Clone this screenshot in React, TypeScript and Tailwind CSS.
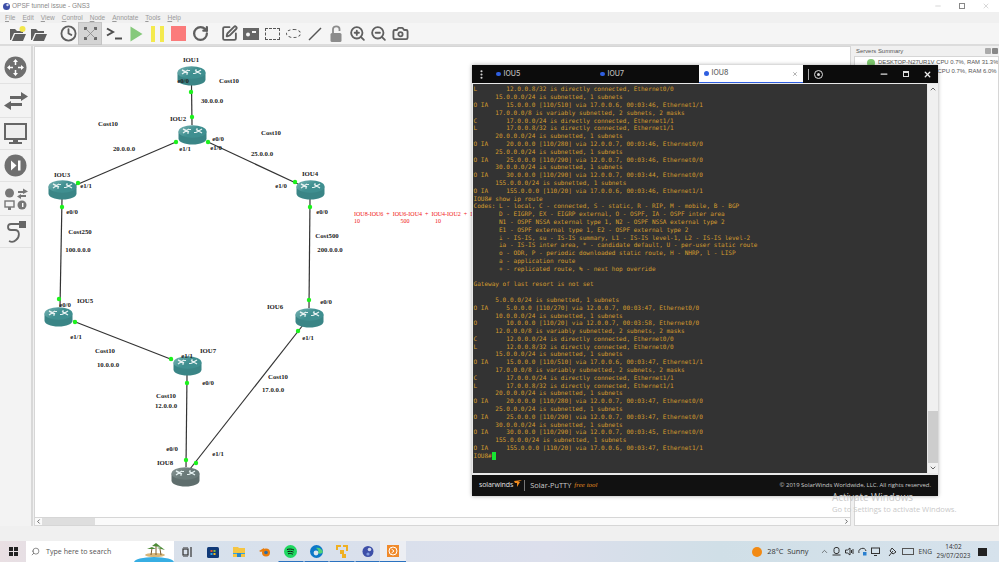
import { Camera, ChevronDown, ChevronLeft, ChevronRight, ChevronUp, Clock, EllipsisVertical, Minus, RotateCw, Search, SquarePen, X, ZoomIn, ZoomOut } from 'lucide-react'

const terminalLines = [
  'L        12.0.0.8/32 is directly connected, Ethernet0/0',
  '      15.0.0.0/24 is subnetted, 1 subnets',
  'O IA     15.0.0.0 [110/510] via 17.0.0.6, 00:03:46, Ethernet1/1',
  '      17.0.0.0/8 is variably subnetted, 2 subnets, 2 masks',
  'C        17.0.0.0/24 is directly connected, Ethernet1/1',
  'L        17.0.0.8/32 is directly connected, Ethernet1/1',
  '      20.0.0.0/24 is subnetted, 1 subnets',
  'O IA     20.0.0.0 [110/280] via 12.0.0.7, 00:03:46, Ethernet0/0',
  '      25.0.0.0/24 is subnetted, 1 subnets',
  'O IA     25.0.0.0 [110/290] via 12.0.0.7, 00:03:46, Ethernet0/0',
  '      30.0.0.0/24 is subnetted, 1 subnets',
  'O IA     30.0.0.0 [110/290] via 12.0.0.7, 00:03:44, Ethernet0/0',
  '      155.0.0.0/24 is subnetted, 1 subnets',
  'O IA     155.0.0.0 [110/20] via 17.0.0.6, 00:03:46, Ethernet1/1',
  'IOU8# show ip route',
  'Codes: L - local, C - connected, S - static, R - RIP, M - mobile, B - BGP',
  '       D - EIGRP, EX - EIGRP external, O - OSPF, IA - OSPF inter area',
  '       N1 - OSPF NSSA external type 1, N2 - OSPF NSSA external type 2',
  '       E1 - OSPF external type 1, E2 - OSPF external type 2',
  '       i - IS-IS, su - IS-IS summary, L1 - IS-IS level-1, L2 - IS-IS level-2',
  '       ia - IS-IS inter area, * - candidate default, U - per-user static route',
  '       o - ODR, P - periodic downloaded static route, H - NHRP, l - LISP',
  '       a - application route',
  '       + - replicated route, % - next hop override',
  ' ',
  'Gateway of last resort is not set',
  ' ',
  '      5.0.0.0/24 is subnetted, 1 subnets',
  'O IA     5.0.0.0 [110/270] via 12.0.0.7, 00:03:47, Ethernet0/0',
  '      10.0.0.0/24 is subnetted, 1 subnets',
  'O        10.0.0.0 [110/20] via 12.0.0.7, 00:03:58, Ethernet0/0',
  '      12.0.0.0/8 is variably subnetted, 2 subnets, 2 masks',
  'C        12.0.0.0/24 is directly connected, Ethernet0/0',
  'L        12.0.0.8/32 is directly connected, Ethernet0/0',
  '      15.0.0.0/24 is subnetted, 1 subnets',
  'O IA     15.0.0.0 [110/510] via 17.0.0.6, 00:03:47, Ethernet1/1',
  '      17.0.0.0/8 is variably subnetted, 2 subnets, 2 masks',
  'C        17.0.0.0/24 is directly connected, Ethernet1/1',
  'L        17.0.0.8/32 is directly connected, Ethernet1/1',
  '      20.0.0.0/24 is subnetted, 1 subnets',
  'O IA     20.0.0.0 [110/280] via 12.0.0.7, 00:03:47, Ethernet0/0',
  '      25.0.0.0/24 is subnetted, 1 subnets',
  'O IA     25.0.0.0 [110/290] via 12.0.0.7, 00:03:47, Ethernet0/0',
  '      30.0.0.0/24 is subnetted, 1 subnets',
  'O IA     30.0.0.0 [110/290] via 12.0.0.7, 00:03:45, Ethernet0/0',
  '      155.0.0.0/24 is subnetted, 1 subnets',
  'O IA     155.0.0.0 [110/20] via 17.0.0.6, 00:03:47, Ethernet1/1',
]

// page coordinates, the canvas starts at 34,47
const routers = [
  { x: 177, y: 67 },
  { x: 178, y: 126 },
  { x: 48, y: 181 },
  { x: 296, y: 181 },
  { x: 44, y: 308 },
  { x: 295, y: 309 },
  { x: 173, y: 357 },
  { x: 171, y: 468, idle: true },
]

const links = [
  [191.5, 86, 192, 126],
  [176, 143, 76, 186],
  [208, 143, 298, 185],
  [62, 200, 60, 308],
  [310, 200, 309, 309],
  [73, 322, 173, 361],
  [187, 376, 186, 468],
  [303, 326, 190, 470],
]

const dots = [
  [191, 93], [192, 118], [176, 143], [78, 184], [208, 143], [295, 183], [62, 208], [59, 300],
  [310, 208], [309, 301], [75, 323], [171, 360], [187, 384], [186, 461], [298, 332], [196, 464],
]

const labels: [string, number, number][] = [
  ['IOU1', 191, 61], ['e0/0', 183, 82], ['Cost10', 229, 82], ['30.0.0.0', 212, 102], ['IOU2', 178, 120],
  ['Cost10', 108, 125], ['20.0.0.0', 124, 150], ['e1/1', 185, 150], ['e0/0', 218, 140], ['e1/0', 216, 149],
  ['IOU3', 62, 176], ['e1/1', 86, 187], ['e0/0', 72, 213], ['Cost250', 80, 233], ['100.0.0.0', 78, 251],
  ['Cost10', 271, 134], ['25.0.0.0', 262, 155], ['IOU4', 310, 175], ['e1/0', 281, 187], ['e0/0', 322, 213],
  ['Cost500', 327, 237], ['200.0.0.0', 330, 251], ['e0/0', 326, 303], ['IOU6', 275, 308], ['e1/1', 308, 339],
  ['IOU5', 85, 302], ['e0/0', 65, 306], ['e1/1', 76, 338], ['Cost10', 105, 352], ['10.0.0.0', 108, 366],
  ['e1/1', 187, 357], ['IOU7', 208, 352], ['e0/0', 208, 384], ['Cost10', 166, 397], ['12.0.0.0', 166, 407],
  ['e0/0', 172, 450], ['IOU8', 165, 464], ['e1/1', 218, 455], ['Cost10', 278, 378], ['17.0.0.0', 273, 391],
]

function Router({ idle }: { idle?: boolean }) {
  const gradient = idle ? 'routerIdle' : 'routerUp'
  return (
    <svg width="29" height="20" viewBox="0 0 29 20">
      <defs>
        <linearGradient id={gradient} x1="0" y1="0" x2="1" y2="0.6">
          <stop offset="0" stopColor={idle ? '#8a9796' : '#78b3b3'} />
          <stop offset="0.6" stopColor={idle ? '#6a7a79' : '#3f8f90'} />
        </linearGradient>
      </defs>
      <path d="M0.5 6.5V13.5C0.5 17 6.5 19.5 14.5 19.5S28.5 17 28.5 13.5V6.5Z" fill={idle ? '#5f6e6d' : '#3a8586'} />
      <ellipse cx="14.5" cy="6.5" rx="14" ry="6.2" fill={`url(#${gradient})`} />
      <path d="M5 4L11 7M11 4L5 8M18 4.5L24 8M24 4L18 7.5" stroke="#e4f0f0" strokeWidth="1.4" />
      <path d="M11 4.5H13M16 7.5H18M9 8H11M20 4H18" stroke="#e4f0f0" strokeWidth="1" />
    </svg>
  )
}

function ToolButton({ children, active }: { children: React.ReactNode; active?: boolean }) {
  return (
    <div className={active ? 'flex h-[21px] w-[21.3px] items-center justify-center bg-[#d4d4d4] ring-1 ring-[#c4c4c4]' : 'flex h-[21px] w-[21.3px] items-center justify-center'}>
      {children}
    </div>
  )
}

function Toolbar() {
  const stroke = { size: 17, strokeWidth: 2.6, color: '#5f5f5f' }
  return (
    <div className="flex h-[23px] items-center border-b-2 border-[#dcdcdc] bg-[#f5f5f5] pl-[7px]">
      <ToolButton>
        <svg width="18" height="16" viewBox="0 0 18 16">
          <path d="M1 14V3H6L8 5H14V7H5L2 14ZM3 15L6 8H17L14 15Z" fill="#5f5f5f" />
          <circle cx="13.5" cy="3" r="3" fill="#f2e64a" />
        </svg>
      </ToolButton>
      <ToolButton>
        <svg width="17" height="14" viewBox="0 0 17 14">
          <path d="M1 13V2H6L8 4H14V6H5L2 13ZM3 14L6 7H17L14 14Z" fill="#5f5f5f" />
        </svg>
      </ToolButton>
      <div className="w-[8.5px]" />
      <ToolButton><Clock {...stroke} /></ToolButton>
      <ToolButton active>
        <svg width="15" height="15" viewBox="0 0 15 15" fill="#6c6c6c">
          <rect x="1" y="1" width="3" height="3" /><rect x="11" y="1" width="3" height="3" />
          <rect x="1" y="11" width="3" height="3" /><rect x="11" y="11" width="3" height="3" />
          <path d="M3 3L12 12M12 3L3 12" stroke="#8a8a8a" strokeWidth="0.8" />
        </svg>
      </ToolButton>
      <div className="w-[3.5px]" />
      <ToolButton>
        <svg width="17" height="13" viewBox="0 0 17 13" fill="none" stroke="#4d4d4d">
          <path d="M1 1.5L7 5L1 8.5" strokeWidth="2" />
          <path d="M9 11.5H16" strokeWidth="2" />
        </svg>
      </ToolButton>
      <ToolButton>
        <svg width="13" height="16" viewBox="0 0 13 16"><path d="M0.5 0.5L12.5 8L0.5 15.5Z" fill="#86c97b" /></svg>
      </ToolButton>
      <ToolButton>
        <svg width="13" height="16" viewBox="0 0 13 16" fill="#f4ea4e"><rect x="0" width="4" height="16" /><rect x="9" width="4" height="16" /></svg>
      </ToolButton>
      <ToolButton>
        <div className="h-[15px] w-[15px] bg-[#fb7b7b]" />
      </ToolButton>
      <ToolButton><RotateCw {...stroke} strokeWidth={3.2} /></ToolButton>
      <div className="w-[8.5px]" />
      <ToolButton><SquarePen {...stroke} /></ToolButton>
      <ToolButton>
        <svg width="16" height="12" viewBox="0 0 16 12" fill="#666">
          <path fillRule="evenodd" d="M0 0H16V12H0ZM5 4.5A2 2 0 1 0 5 8.5A2 2 0 1 0 5 4.5ZM9 5H13V3L9 3Z" />
        </svg>
      </ToolButton>
      <ToolButton>
        <div className="h-[12px] w-[15px] border-[1.5px] border-dashed border-[#555]" />
      </ToolButton>
      <ToolButton>
        <div className="h-[9px] w-[15px] rounded-[50%] border border-dashed border-[#555]" />
      </ToolButton>
      <ToolButton>
        <svg width="14" height="14" viewBox="0 0 14 14"><path d="M1 13L13 1" stroke="#555" strokeWidth="1.4" /></svg>
      </ToolButton>
      <ToolButton>
        <svg width="13" height="17" viewBox="0 0 13 17" fill="none">
          <path d="M3 8V4C3 0.5 9.5 0.5 9.5 4V6" stroke="#8c8c8c" strokeWidth="1.8" />
          <rect x="0.5" y="8" width="11" height="9" rx="1.5" fill="#8c8c8c" />
        </svg>
      </ToolButton>
      <ToolButton><ZoomIn {...stroke} /></ToolButton>
      <ToolButton><ZoomOut {...stroke} /></ToolButton>
      <ToolButton><Camera {...stroke} /></ToolButton>
    </div>
  )
}

function Dock() {
  return (
    <div className="flex w-[33px] shrink-0 flex-col border-r-2 border-[#d8d8d8] bg-[#f3f3f3] pt-[5px]">
      <div className="flex h-[33px] items-center justify-center border-b border-[#e2e2e2]">
        <svg width="23" height="23" viewBox="0 0 23 23">
          <circle cx="11.5" cy="11.5" r="11" fill="#6f6f6f" />
          <path d="M11.5 3L14 6H9ZM11.5 20L9 17H14ZM3 11.5L6 9V14ZM20 11.5L17 14V9Z" fill="#fff" />
          <path d="M11.5 5V9M11.5 14V18M5 11.5H9M14 11.5H18" stroke="#fff" strokeWidth="1.5" />
        </svg>
      </div>
      <div className="flex h-[34px] items-center justify-center border-b border-[#e2e2e2]">
        <svg width="24" height="20" viewBox="0 0 24 20" fill="#666">
          <path d="M6 8V5H17V1L24 5.5L17 10V8Z" />
          <path d="M18 12V15H7V19L0 14.5L7 10V12Z" />
        </svg>
      </div>
      <div className="flex h-[32px] items-center justify-center border-b border-[#e2e2e2]">
        <svg width="23" height="22" viewBox="0 0 23 22">
          <rect x="1" y="1" width="21" height="15" fill="#eee" stroke="#666" strokeWidth="2" />
          <path d="M9 16H14V19H18V21H5V19H9Z" fill="#666" />
        </svg>
      </div>
      <div className="flex h-[32px] items-center justify-center border-b border-[#e2e2e2]">
        <svg width="23" height="23" viewBox="0 0 23 23">
          <circle cx="11.5" cy="11.5" r="11" fill="#6f6f6f" />
          <path d="M7 6.5L12.5 11.5L7 16.5Z" fill="#fff" />
          <rect x="14" y="6.5" width="2.5" height="10" fill="#fff" />
        </svg>
      </div>
      <div className="flex h-[34px] items-center justify-center border-b border-[#e2e2e2]">
        <svg width="24" height="22" viewBox="0 0 24 22" fill="#777">
          <circle cx="5.5" cy="5" r="4.5" />
          <path d="M14 3H19V0.5L24 3.5L19 6V5H14ZM22 7V9H17V11L13 8.5L17 6V7Z" />
          <rect x="1" y="13" width="9" height="6" fill="none" stroke="#777" strokeWidth="1.4" />
          <rect x="4" y="19" width="3" height="3" />
          <circle cx="18" cy="17" r="4.5" />
          <rect x="18" y="15" width="1.4" height="4" fill="#fff" />
        </svg>
      </div>
      <div className="flex h-[32px] items-center justify-center border-b border-[#e2e2e2]">
        <svg width="22" height="24" viewBox="0 0 22 24" fill="none">
          <path d="M15 4H6C2 4 2 10 6 10H10C15 10 15 17 11 20C9 22 6 22 4 21" stroke="#666" strokeWidth="1.8" />
          <rect x="14" y="1" width="7" height="7" fill="#666" />
        </svg>
      </div>
    </div>
  )
}

function Canvas() {
  return (
    <div className="relative flex min-w-0 flex-1 flex-col">
      <div className="relative flex-1 overflow-hidden border border-[#d6d6d6] bg-white">
        <svg className="absolute left-[-35px] top-[-48px]" width="999" height="562">
          {links.map(([x1, y1, x2, y2], i) => (
            <line key={i} x1={x1} y1={y1} x2={x2} y2={y2} stroke="#333" strokeWidth="1.2" />
          ))}
        </svg>
        {routers.map((r, i) => (
          <div key={i} className="absolute leading-none" style={{ left: r.x - 35, top: r.y - 48 }}>
            <Router idle={r.idle} />
          </div>
        ))}
        <svg className="absolute left-[-35px] top-[-48px]" width="999" height="562">
          {dots.map(([x, y], i) => (
            <circle key={i} cx={x} cy={y} r="2.2" fill="#1cf21c" />
          ))}
        </svg>
        {labels.map(([text, x, y], i) => (
          <span
            key={i}
            className="absolute -translate-x-1/2 -translate-y-1/2 whitespace-nowrap font-['Liberation_Serif',serif] text-[6.8px] leading-none font-bold text-[#222]"
            style={{ left: x - 35, top: y - 48 }}
          >
            {text}
          </span>
        ))}
        <div className="absolute left-[319px] top-[164px] whitespace-pre font-['Liberation_Serif',serif] text-[6px] leading-[7px] text-[#f01414]">
          <div>IOU8-IOU6  +  IOU6-IOU4  +  IOU4-IOU2  +  IO</div>
          <div>10{'                           '}500{'                 '}10</div>
        </div>
      </div>
      <div className="flex h-[8px] items-center border-x border-b border-[#d6d6d6] bg-[#fafafa]">
        <ChevronLeft size={7} strokeWidth={3} color="#555" />
        <div className="h-full w-[53px] bg-[#dedede]" />
        <div className="flex-1" />
        <ChevronRight size={7} strokeWidth={3} color="#555" />
      </div>
    </div>
  )
}

function ServersPanel() {
  return (
    <div className="ml-[3px] flex w-[145px] shrink-0 flex-col font-['Liberation_Sans',sans-serif] text-[5.9px] text-[#555]">
      <div className="flex h-[10px] items-center justify-between pl-[2px] pr-[1px]">
        <span>Servers Summary</span>
        <div className="flex gap-[1px]">
          <div className="h-[6px] w-[6px] rounded-[1px] bg-[#aaa]" />
          <div className="h-[6px] w-[6px] rounded-[1px] bg-[#888]" />
        </div>
      </div>
      <div className="flex-1 overflow-hidden border border-[#d6d6d6] bg-white pt-[1px] leading-[9px] whitespace-nowrap">
        <div className="flex items-center gap-[3px] pl-[12px]">
          <div className="h-[8px] w-[8px] shrink-0 rounded-full bg-[#7ec86f]" />
          <span>DESKTOP-N27UR1V CPU 0.7%, RAM 31.3%</span>
        </div>
        <div className="flex items-center gap-[3px] pl-[12px]">
          <div className="h-[8px] w-[8px] shrink-0 rounded-full bg-[#7ec86f]" />
          <span className="w-[56.5px] shrink-0 overflow-hidden">GNS3 VM (GNS3)</span>
          <span>CPU 0.7%, RAM 6.0%</span>
        </div>
      </div>
    </div>
  )
}

function Terminal() {
  return (
    <div className="absolute left-[472px] top-[65px] flex h-[431px] w-[466px] flex-col bg-[#e9e9e9] shadow-[0_0_4px_rgba(0,0,0,0.35)]">
      <div className="flex h-[18px] items-center bg-[#0c0c0c] font-['Inter',sans-serif] text-[7px] font-medium text-[#bdbdbd]">
        <div className="flex w-[19px] justify-center"><EllipsisVertical size={11} color="#ddd" strokeWidth={2.6} /></div>
        <div className="flex w-[104px] items-center gap-[3px] pl-[5px]">
          <div className="h-[4.5px] w-[4.5px] rounded-full bg-[#2f5fe0]" />IOU5
        </div>
        <div className="flex w-[104px] items-center gap-[3px] pl-[5px]">
          <div className="h-[4.5px] w-[4.5px] rounded-full bg-[#2f5fe0]" />IOU7
        </div>
        <div className="flex h-full w-[104px] items-center gap-[3px] border-b-[1.5px] border-[#2f5fe0] bg-white pl-[5px] pr-[5px] text-[#666]">
          <div className="h-[4.5px] w-[4.5px] rounded-full bg-[#2f5fe0]" />IOU8
          <X className="ml-auto" size={6} color="#999" strokeWidth={3} />
        </div>
        <div className="ml-[5px] h-[11px] w-[1px] bg-[#aaa]" />
        <div className="ml-[5px] flex h-[9px] w-[9px] items-center justify-center rounded-full border border-[#ddd]">
          <div className="h-[3px] w-[3px] rounded-full bg-[#ddd]" />
        </div>
        <div className="ml-auto flex items-center gap-[14px] pr-[6px]">
          <Minus size={10} color="#ddd" strokeWidth={3} />
          <div className="h-[6px] w-[6px] border border-t-2 border-[#ddd]" />
          <X size={9} color="#eee" strokeWidth={3.5} />
        </div>
      </div>
      <div className="flex h-[390px] pl-[1px] pt-[1px]">
        <div className="flex-1 overflow-hidden bg-[#333333] pl-[0.5px] pt-[1.4px] font-['DejaVu_Sans_Mono',monospace] text-[6.06px] leading-[7.8px] whitespace-pre text-[#d39c2e]">
          {terminalLines.map((line, i) => (
            <div key={i} className="h-[7.8px]">{line}</div>
          ))}
          <div className="flex h-[7.8px]">IOU8#<span className="h-[7.8px] w-[4px] bg-[#17e632]" /></div>
        </div>
        <div className="ml-[1px] flex w-[10px] flex-col items-center bg-[#f0f0f0]">
          <ChevronUp size={8} strokeWidth={3} color="#666" className="my-[1px]" />
          <div className="flex-1" />
          <div className="h-[52px] w-full bg-[#cdcdcd]" />
          <ChevronDown size={8} strokeWidth={3} color="#666" className="my-[1px]" />
        </div>
      </div>
      <div className="mt-[2px] flex h-[21px] items-center bg-[#111] pl-[7px] pr-[7px] font-['Open_Sans',sans-serif] text-[7.4px] text-[#ccc]">
        <span className="text-[7px] tracking-[-0.1px] text-[#e0e0e0]">solarwinds</span>
        <svg className="mb-[4px] ml-[1px]" width="8" height="7" viewBox="0 0 8 7" fill="#f08a1d"><path d="M0 1L8 0L4 2L6 2L3 7L3 3L1 3Z" /></svg>
        <div className="ml-[2px] h-[11px] w-[1px] bg-[#777]" />
        <span className="ml-[5px]">Solar-PuTTY</span>
        <span className="ml-[3px] font-['Liberation_Serif',serif] text-[7px] italic text-[#e08a20]">free tool</span>
        <span className="ml-auto text-[5.95px] whitespace-nowrap">© 2019 SolarWinds Worldwide, LLC. All rights reserved.</span>
      </div>
    </div>
  )
}

function Taskbar() {
  const glyphs = [
    <svg key="tasks" width="11" height="10" viewBox="0 0 11 10" fill="none" stroke="#333" strokeWidth="1.2"><rect x="1" y="2" width="5" height="6" /><path d="M1 0H6M1 10H6M9 0V10" /></svg>,
    <svg key="store" width="12" height="12" viewBox="0 0 12 12"><rect y="1" width="12" height="11" rx="1.5" fill="#103a78" /><rect x="3.5" y="4" width="2" height="2" fill="#e8532c" /><rect x="6.5" y="4" width="2" height="2" fill="#7dbb3a" /><rect x="3.5" y="7" width="2" height="2" fill="#2ba5e8" /><rect x="6.5" y="7" width="2" height="2" fill="#f5bc1c" /></svg>,
    <svg key="files" width="12" height="11" viewBox="0 0 12 11"><path d="M0 1H5L6 2H12V11H0Z" fill="#f5c542" /><rect x="0" y="7" width="12" height="1" fill="#2ba5e8" /><rect x="4" y="7" width="4" height="4" fill="#2c87c9" /></svg>,
    <svg key="blender" width="12" height="10" viewBox="0 0 12 10"><circle cx="7" cy="5.5" r="4" fill="#e87d0d" /><circle cx="7" cy="5.5" r="1.8" fill="#2a6da8" /><path d="M0 4L5 1V3L2 5Z" fill="#e87d0d" /></svg>,
    <svg key="spotify" width="13" height="13" viewBox="0 0 13 13" fill="none"><circle cx="6.5" cy="6.5" r="6.5" fill="#1ed760" /><path d="M3 4.5C5.5 3.7 8 4 10 5M3.5 6.7C5.5 6 7.8 6.3 9.5 7.2M4 8.8C5.8 8.2 7.3 8.4 8.8 9.2" stroke="#111" strokeWidth="1" /></svg>,
    <svg key="edge" width="13" height="13" viewBox="0 0 13 13"><circle cx="6.5" cy="6.5" r="6.5" fill="#0c78c8" /><path d="M6 3C9 2 12 4 13 7C12 9 9 9 8 8C9 6 8 4 6 3Z" fill="#4fd17a" /><circle cx="6" cy="8" r="2.4" fill="#dbe6ef" /></svg>,
    <svg key="app" width="12" height="13" viewBox="0 0 12 13" fill="#efb022"><path d="M0 0H5V2H2V5H0ZM7 0H12V6H10V2H7ZM4 5H8V9H10V13H6V9H4Z" /></svg>,
    <svg key="gns" width="12" height="13" viewBox="0 0 12 13"><circle cx="6" cy="6.5" r="5.5" fill="#3d4fa8" /><circle cx="7.5" cy="4.5" r="1.8" fill="#cfd6ee" /><circle cx="6" cy="9" r="1.6" fill="#7f9be0" /></svg>,
    <svg key="putty" width="12" height="12" viewBox="0 0 12 12" fill="none"><rect width="12" height="12" fill="#f08a2c" /><circle cx="6" cy="6" r="4" stroke="#fff" /><path d="M4.5 4L7 6L4.5 8" stroke="#fff" /></svg>,
  ]
  return (
    <div className="flex h-[21px] shrink-0 items-center bg-[linear-gradient(90deg,#e9dfe3_0%,#d7e1ec_20%,#dcdfec_55%,#d0dfe7_72%,#d6e2ec_100%)] font-['Open_Sans',sans-serif] text-[7.4px] text-[#333]">
      <div className="flex w-[26px] justify-center">
        <div className="grid grid-cols-2 gap-[1px]">
          <div className="h-[4px] w-[4px] bg-[#222]" /><div className="h-[4px] w-[4px] bg-[#222]" />
          <div className="h-[4px] w-[4px] bg-[#222]" /><div className="h-[4px] w-[4px] bg-[#222]" />
        </div>
      </div>
      <div className="relative flex h-full w-[148px] items-center gap-[6px] overflow-hidden bg-white pl-[5px] text-[7.1px] text-[#555]">
        <Search size={9} strokeWidth={1.6} color="#444" className="-scale-x-100" />
        Type here to search
        <div className="absolute -bottom-[6px] right-0 h-[11px] w-[40px] rounded-t-[50%] bg-[#37aee3]" />
        <svg className="absolute right-[8px] top-[1px]" width="22" height="15" viewBox="0 0 22 15">
          <ellipse cx="11" cy="13" rx="10" ry="2" fill="#d9b77a" />
          <path d="M7 13L8 6M12 13V4M17 13L16 7" stroke="#7b5a2e" strokeWidth="1" />
          <path d="M3 7L8 5L12 7ZM8 4L12 1L17 5ZM13 6L17 5L21 8Z" fill="#4c8a35" />
        </svg>
      </div>
      {glyphs.map((glyph, i) => (
        <div key={i} className={i === 8 ? 'flex h-full w-[25.6px] items-center justify-center border-b-[1.5px] border-[#2a72c0] bg-[#eceef3]' : i >= 4 ? 'flex h-full w-[25.6px] items-center justify-center border-x-[1px] border-b-[1.5px] border-x-transparent border-b-[#2a72c0]' : 'flex h-full w-[26px] items-center justify-center'}>
          {glyph}
        </div>
      ))}
      <div className="flex-1" />
      <div className="h-[10px] w-[10px] rounded-full bg-[#f28a14]" />
      <span className="ml-[5px] w-[20px]">28°C</span>
      <span>Sunny</span>
      <ChevronUp className="ml-[11px]" size={9} strokeWidth={1.6} color="#333" />
      <div className="ml-[3px] flex items-center gap-[4px] text-[#333]">
        <svg width="9" height="10" viewBox="0 0 9 10" fill="none" stroke="#333"><rect x="2" y="0.5" width="5" height="6" rx="2" /><path d="M0.5 8H8.5" /></svg>
        <svg width="9" height="9" viewBox="0 0 9 9" fill="none" stroke="#333"><path d="M0.5 3H2.5L5 1V8L2.5 6H0.5ZM6.5 3V6M8 2V7" /></svg>
        <svg width="9" height="9" viewBox="0 0 9 9" fill="none" stroke="#333"><path d="M1 6A3.5 3.5 0 0 1 8 4" /><rect x="5" y="5" width="3.5" height="3.5" fill="#2a80d0" stroke="none" /></svg>
        <svg width="9" height="9" viewBox="0 0 9 9" fill="none" stroke="#333"><rect x="0.5" y="1" width="8" height="5.5" /><path d="M3 8.5H6" /></svg>
        <svg className="ml-[4px]" width="9" height="10" viewBox="0 0 9 10" fill="none" stroke="#333"><path d="M1 9L5 4M4 1L8 5L5 7L2 4Z" /></svg>
      </div>
      <div className="ml-[5px] h-[7px] w-[12px] border border-[#555]" />
      <span className="ml-[5px] text-[6.6px]">ENG</span>
      <div className="ml-[6px] flex w-[31px] flex-col items-center text-[6.4px] leading-[8.6px]">
        <span>14:02</span>
        <span>29/07/2023</span>
      </div>
      <div className="ml-[9px] mr-[12px] h-[8px] w-[9px] bg-[#222]" />
    </div>
  )
}

export default function App() {
  return (
    <div className="relative flex h-[562px] w-[999px] flex-col overflow-hidden bg-[#f0f0f0] font-['Liberation_Sans',sans-serif]">
      <div className="flex h-[12px] shrink-0 items-center bg-white pl-[3px] text-[6.5px] text-[#888]">
        <svg width="7" height="9" viewBox="0 0 7 9"><circle cx="3.5" cy="4.5" r="3.5" fill="#3d4fa8" /><circle cx="4.5" cy="3" r="1.2" fill="#d7dcf0" /></svg>
        <span className="ml-[2px]">OPSF tunnel issue - GNS3</span>
        <div className="ml-auto flex items-center gap-[17px] pr-[9px]">
          <Minus size={8} strokeWidth={1} color="#888" />
          <div className="h-[6px] w-[6px] border border-[#888]" />
          <X size={8} strokeWidth={1} color="#888" />
        </div>
      </div>
      <div className="flex h-[11px] shrink-0 items-center gap-[7px] pl-[5px] text-[6.5px] text-[#999]">
        {['File', 'Edit', 'View', 'Control', 'Node', 'Annotate', 'Tools', 'Help'].map(item => (
          <span key={item}><span className="underline">{item[0]}</span>{item.slice(1)}</span>
        ))}
      </div>
      <Toolbar />
      <div className="flex h-[480px] shrink-0 pr-0">
        <Dock />
        <div className="ml-[1px] flex min-w-0 flex-1"><Canvas /></div>
        <ServersPanel />
      </div>
      <div className="flex-1" />
      <Taskbar />
      <Terminal />
      <div className="pointer-events-none absolute left-[832px] top-[493px] font-['Open_Sans',sans-serif] leading-none text-[#c9c9c9]">
        <div className="text-[9.9px]">Activate Windows</div>
        <div className="mt-[3px] text-[7.6px]">Go to Settings to activate Windows.</div>
      </div>
    </div>
  )
}
